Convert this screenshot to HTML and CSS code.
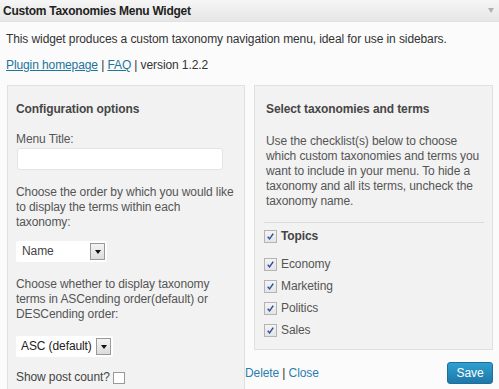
FILE: index.html
```html
<!DOCTYPE html>
<html>
<head>
<meta charset="utf-8">
<link rel="stylesheet" href="styles.css">
</head>
<body>
<div class="widget">
  <div class="widget-top">
    <span class="widget-title">Custom Taxonomies Menu Widget</span>
    <span class="toggle"></span>
  </div>
  <div class="widget-inside">
    <p class="intro">This widget produces a custom taxonomy navigation menu, ideal for use in sidebars.</p>
    <p class="links"><a href="#">Plugin homepage</a> | <a href="#">FAQ</a> | version 1.2.2</p>
    <div class="columns">
      <div class="panel left">
        <h4>Configuration options</h4>
        <label class="label">Menu Title:</label>
        <div class="input"></div>
        <p class="desc">Choose the order by which you would like to display the terms within each taxonomy:</p>
        <div class="select sel-name"><span class="sel-text">Name</span><span class="sel-btn"><span class="tri"></span></span></div>
        <p class="desc">Choose whether to display taxonomy terms in ASCending order(default) or DESCending order:</p>
        <div class="select sel-asc"><span class="sel-text">ASC (default)</span><span class="sel-btn"><span class="tri"></span></span></div>
        <div class="count-row">Show post count? <span class="cb"></span></div>
      </div>
      <div class="right-col">
        <div class="panel right">
          <h4>Select taxonomies and terms</h4>
          <p class="desc">Use the checklist(s) below to choose which custom taxonomies and terms you want to include in your menu. To hide a taxonomy and all its terms, uncheck the taxonomy name.</p>
          <div class="sep"></div>
          <div class="term topic"><span class="cb checked"><svg viewBox="0 0 12 12" width="12" height="12"><path d="M3 6.2 L5 8.6 L9 2.8" fill="none" stroke="#2a4f9c" stroke-width="1.6"/></svg></span>Topics</div>
          <div class="terms">
            <div class="term"><span class="cb checked"><svg viewBox="0 0 12 12" width="12" height="12"><path d="M3 6.2 L5 8.6 L9 2.8" fill="none" stroke="#2a4f9c" stroke-width="1.6"/></svg></span>Economy</div>
            <div class="term"><span class="cb checked"><svg viewBox="0 0 12 12" width="12" height="12"><path d="M3 6.2 L5 8.6 L9 2.8" fill="none" stroke="#2a4f9c" stroke-width="1.6"/></svg></span>Marketing</div>
            <div class="term"><span class="cb checked"><svg viewBox="0 0 12 12" width="12" height="12"><path d="M3 6.2 L5 8.6 L9 2.8" fill="none" stroke="#2a4f9c" stroke-width="1.6"/></svg></span>Politics</div>
            <div class="term"><span class="cb checked"><svg viewBox="0 0 12 12" width="12" height="12"><path d="M3 6.2 L5 8.6 L9 2.8" fill="none" stroke="#2a4f9c" stroke-width="1.6"/></svg></span>Sales</div>
          </div>
        </div>
        <div class="footer">
          <span class="actions"><a href="#">Delete</a> | <a href="#">Close</a></span>
          <span class="save">Save</span>
        </div>
      </div>
    </div>
  </div>
</div>
</body>
</html>
```
FILE: styles.css
```css
html, body {
  margin: 0;
  padding: 0;
}
body {
  font-family: "Liberation Sans", Arial, sans-serif;
  font-size: 12px;
  letter-spacing: -0.1px;
  color: #333;
  background: #fbfbfb;
  width: 499px;
  height: 389px;
  overflow: hidden;
}
.widget {
  height: 389px;
  overflow: hidden;
}
.widget-top {
  height: 21px;
  background: linear-gradient(#f6f6f6, #e6e6e6);
  border-bottom: 1px solid #e2e2e2;
  display: flex;
  align-items: center;
  justify-content: space-between;
  padding: 0 5px 0 3px;
}
.widget-title {
  font-weight: bold;
  font-size: 12px;
  letter-spacing: -0.25px;
  color: #222;
}
.toggle {
  width: 0;
  height: 0;
  border-left: 3px solid transparent;
  border-right: 3px solid transparent;
  border-top: 5px solid #b0b0b0;
}
.widget-inside {
  padding: 10px 6px 0 6px;
}
.intro, .links {
  margin: 0;
  line-height: 15px;
}
.links {
  margin-top: 11px;
}
a {
  color: #21759b;
}
.columns {
  display: flex;
  gap: 9px;
  margin: 12px 0 0 1px;
  align-items: flex-start;
}
.panel {
  background: #f2f2f2;
  border: 1px solid #e0e0e0;
  color: #555;
  line-height: 15px;
}
.panel h4 {
  margin: 0;
  font-size: 12px;
  font-weight: bold;
  color: #464646;
  line-height: 15px;
}
.left {
  width: 220px;
  padding: 16px 8px 20px 8px;
}
.label {
  display: block;
  margin-top: 15px;
}
.input {
  width: 204px;
  height: 20px;
  margin: 1px 0 0 1px;
  background: #fff;
  border: 1px solid #e4e4e4;
  border-radius: 3px;
}
.desc {
  margin: 15px 0 0;
}
.select {
  display: flex;
  align-items: center;
  justify-content: space-between;
  height: 21px;
  margin-top: 11px;
  background: #fff;
  border-radius: 2px;
  padding: 0 2px 0 6px;
  color: #444;
  box-sizing: border-box;
}
.sel-name { width: 91px; }
.sel-asc { width: 97px; margin-top: 14px; padding-left: 5px; color: #222; }
.sel-btn {
  width: 13px;
  height: 15px;
  border: 1px solid #999;
  background: linear-gradient(#f4f4f4, #dcdcdc);
  display: flex;
  align-items: center;
  justify-content: center;
}
.tri {
  width: 0;
  height: 0;
  border-left: 3px solid transparent;
  border-right: 3px solid transparent;
  border-top: 4px solid #111;
}
.count-row {
  display: flex;
  align-items: center;
  gap: 3px;
  margin-top: 13px;
  color: #444;
}
.cb {
  display: inline-flex;
  width: 10px;
  height: 10px;
  border: 1px solid #999;
  background: #fff;
  align-items: center;
  justify-content: center;
}
.right-col {
  width: 239px;
  display: flex;
  flex-direction: column;
}
.right {
  padding: 16px 6px 8px 11px;
}
.right .desc {
  margin-top: 17px;
}
.sep {
  height: 1px;
  background: #dcdcdc;
  margin: 13px 0 2px -2px;
  width: 220px;
}
.term {
  display: flex;
  align-items: center;
  height: 22px;
  font-size: 12px;
  color: #555;
  margin-left: -2px;
}
.topic {
  font-weight: bold;
  color: #444;
}
.terms {
  margin-top: 6px;
}
.cb.checked {
  width: 11px;
  height: 11px;
  border: 1px solid #b4b4b4;
  background: linear-gradient(#f4f4f4, #e4e4e4);
  margin-right: 4px;
}
.cb.checked svg {
  width: 11px;
  height: 11px;
}
.footer {
  display: flex;
  align-items: center;
  justify-content: space-between;
  margin: 12px 0 0 -9px;
}
.actions {
  color: #333;
}
.actions a {
  text-decoration: none;
  color: #2a7fb0;
}
.save {
  width: 44px;
  height: 20px;
  line-height: 20px;
  text-align: center;
  color: #fff;
  background: linear-gradient(#2e9fd2, #1f78a8);
  border: 1px solid #1d6f9a;
  border-radius: 3px;
  font-size: 12px;
}
```
